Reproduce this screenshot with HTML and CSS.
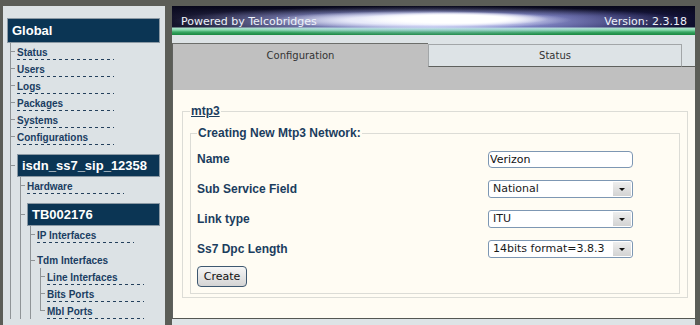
FILE: index.html
```html
<!DOCTYPE html>
<html lang="en">
<head>
<meta charset="utf-8">
<title>Telcobridges - Configuration</title>
<link rel="stylesheet" href="styles.css">
</head>
<body>
<div class="page">
  <aside class="sidebar">
    <div class="node-box root">Global</div>
    <ul class="tree">
      <li class="leaf"><a href="#">Status</a></li>
      <li class="leaf"><a href="#">Users</a></li>
      <li class="leaf"><a href="#">Logs</a></li>
      <li class="leaf"><a href="#">Packages</a></li>
      <li class="leaf"><a href="#">Systems</a></li>
      <li class="leaf"><a href="#">Configurations</a></li>
      <li class="branch"><div class="node-box">isdn_ss7_sip_12358</div>
        <ul class="tree sub">
          <li class="leaf"><a href="#">Hardware</a></li>
          <li class="branch"><div class="node-box">TB002176</div>
            <ul class="tree sub">
              <li class="leaf"><a href="#">IP Interfaces</a></li>
              <li class="folder"><span class="folder-label">Tdm Interfaces</span>
                <ul class="tree sub">
                  <li class="leaf"><a href="#">Line Interfaces</a></li>
                  <li class="leaf"><a href="#">Bits Ports</a></li>
                  <li class="leaf last"><a href="#">Mbl Ports</a></li>
                </ul>
              </li>
            </ul>
          </li>
        </ul>
      </li>
    </ul>
  </aside>
  <main class="main">
    <header class="banner">
      <span>Powered by Telcobridges</span>
      <span>Version: 2.3.18</span>
    </header>
    <div class="strip"></div>
    <nav class="tabs">
      <div class="tab active">Configuration</div>
      <div class="tab">Status</div>
      <div class="tab-fill"></div>
    </nav>
    <section class="panel">
      <div class="content">
        <fieldset class="outer">
          <legend class="legend-link">mtp3</legend>
          <fieldset class="inner">
            <legend>Creating New Mtp3 Network:</legend>
            <div class="form-grid">
              <label class="field-label">Name</label>
              <input class="text-input" type="text" value="Verizon">
              <label class="field-label">Sub Service Field</label>
              <div class="select"><span class="select-value">National</span><span class="select-btn"><span class="caret"></span></span></div>
              <label class="field-label">Link type</label>
              <div class="select"><span class="select-value">ITU</span><span class="select-btn"><span class="caret"></span></span></div>
              <label class="field-label">Ss7 Dpc Length</label>
              <div class="select"><span class="select-value">14bits format=3.8.3</span><span class="select-btn"><span class="caret"></span></span></div>
            </div>
            <button class="create-btn" type="button">Create</button>
          </fieldset>
        </fieldset>
      </div>
    </section>
  </main>
</div>
</body>
</html>
```
FILE: styles.css
```css
* { box-sizing: border-box; }
html, body { margin: 0; padding: 0; }
body {
  background: #5b5d57;
  font-family: "Liberation Sans", Arial, sans-serif;
  width: 700px;
  height: 325px;
  overflow: hidden;
}
.page {
  display: flex;
  gap: 7px;
  padding: 6px 0 0 3px;
  height: 325px;
  overflow: hidden;
}

/* ---------- sidebar ---------- */
.sidebar {
  width: 162px;
  flex: none;
  min-height: 340px;
  background: #dce2e5;
  padding: 12px 5px 0 0;
}
.node-box {
  display: block;
  height: 23px;
  line-height: 21px;
  padding-left: 4px;
  background: #0b3554;
  border: 1px solid #8b99a4;
  color: #ffffff;
  font-weight: bold;
  font-size: 13px;
  white-space: nowrap;
}
.node-box.root {
  margin-left: 4px;
  height: 25px;
  line-height: 23px;
}
.tree {
  list-style: none;
  margin: 0 0 0 7px;
  padding: 0;
}
.tree.sub { margin-left: 3px; }
.tree > li {
  --tick: 8px;
  padding-left: 7px;
  background:
    linear-gradient(#8f9497, #8f9497) 0 0 / 1px 100% no-repeat,
    linear-gradient(#8f9497, #8f9497) 0 var(--tick) / 5px 1px no-repeat;
}
.tree > li.last {
  background:
    linear-gradient(#8f9497, #8f9497) 0 0 / 1px calc(var(--tick) + 1px) no-repeat,
    linear-gradient(#8f9497, #8f9497) 0 var(--tick) / 5px 1px no-repeat;
}
.tree > li.branch {
  --tick: 20px;
  padding-top: 9px;
}
.tree > li.folder { --tick: 17px; }
.leaf a {
  display: block;
  width: 97px;
  padding: 4px 0 1px;
  line-height: 12px;
  font-size: 10px;
  font-weight: bold;
  color: #1a3d62;
  text-decoration: none;
  white-space: nowrap;
  background: repeating-linear-gradient(to right, #23405c 0 3px, transparent 3px 6px) 0 100% / 97px 1px no-repeat;
}
.folder-label {
  display: block;
  padding: 12px 0 1px;
  line-height: 12px;
  font-size: 10px;
  font-weight: bold;
  color: #1a3d62;
  white-space: nowrap;
}

/* ---------- main ---------- */
.main {
  width: 523px;
  flex: none;
  display: flex;
  flex-direction: column;
  background: #dde3e6;
}
.banner {
  height: 29px;
  display: flex;
  justify-content: space-between;
  align-items: flex-start;
  padding: 9px 8px 0 9px;
  font-family: "DejaVu Sans", sans-serif;
  font-size: 11px;
  line-height: 13px;
  color: #eef2fb;
  background-color: #101028;
  background-image:
    radial-gradient(95px 7px at 282px 13px, #ffffff 0%, #ffffff 55%, rgba(255,255,255,0) 100%),
    radial-gradient(150px 9px at 250px 14px, rgba(255,255,255,0.95) 0%, rgba(245,246,255,0.85) 50%, rgba(240,242,255,0) 100%),
    radial-gradient(260px 15px at 260px 15px, rgba(190,196,250,0.95) 0%, rgba(150,160,230,0) 100%),
    linear-gradient(to bottom, rgba(0,0,0,0) 0px, rgba(0,0,0,0) 21px, rgba(185,240,215,0.95) 22px, #86d9ab 24px, #3aa865 26px, #22904a 28px, #1d8a44 29px),
    linear-gradient(to bottom, #07071a 0px, #0c0c22 3px, rgba(30,30,60,0) 10px),
    linear-gradient(to right, #14142a 0%, #34345c 18%, #4a5090 36%, #8088c8 50%, #4a4f98 66%, #22225a 84%, #0e0e2c 100%);
}
.strip { height: 8px; }
.tabs {
  display: flex;
  height: 24px;
  font-family: "DejaVu Sans", sans-serif;
  font-size: 10px;
  color: #333333;
}
.tab {
  width: 254px;
  margin-top: 1px;
  height: 23px;
  line-height: 21px;
  text-align: center;
  background: #dde3e6;
  border: 1px solid #a2a6a8;
  border-bottom-color: #5f615e;
}
.tab.active {
  width: 256px;
  margin-top: 0;
  height: 24px;
  line-height: 23px;
  background: #c0c0c0;
  border: none;
  border-left: 1px solid #5f615e;
  border-top: 1px solid #6c6e6b;
}
.tab-fill {
  flex: 1;
  border-bottom: 1px solid #5f615e;
}
.panel {
  background: #c0c0c0;
  border-left: 1px solid #5f615e;
  border-bottom: 1px solid #555752;
  padding-top: 23px;
}
.content {
  height: 228px;
  background: #fffcf3;
  padding-top: 14px;
  overflow: hidden;
}
fieldset {
  margin: 0;
  min-width: 0;
  border: 1px solid #dcdcd6;
}
legend {
  padding: 0 1px;
  font-size: 12px;
  font-weight: bold;
  line-height: 14px;
  color: #1b3d5e;
}
.legend-link { text-decoration: underline; }
.outer {
  margin: 0 7px 0 9px;
  padding: 0 7px 3px;
}
.inner {
  margin: 8px 0 0 0;
  padding: 10px 6px 6px;
}
.form-grid {
  display: grid;
  grid-template-columns: 291px 145px;
  grid-auto-rows: 18px;
  row-gap: 12px;
  align-items: center;
}
.field-label {
  font-size: 12px;
  font-weight: bold;
  color: #1b3d5e;
  white-space: nowrap;
}
.text-input {
  height: 17px;
  width: 145px;
  margin: 1px 0 0;
  padding: 0 1px;
  border: 1px solid #7d97b3;
  border-radius: 4px;
  background: #ffffff;
  font-family: "DejaVu Sans", sans-serif;
  font-size: 11px;
  color: #111111;
  outline: none;
}
.select {
  display: flex;
  height: 18px;
  width: 145px;
  border: 1px solid #7d97b3;
  border-radius: 3px;
  background: #ffffff;
}
.select-value {
  flex: 1;
  padding-left: 4px;
  line-height: 16px;
  font-family: "DejaVu Sans", sans-serif;
  font-size: 11px;
  color: #1a1a1a;
  white-space: nowrap;
  overflow: hidden;
}
.select-btn {
  width: 18px;
  margin: 1px 1px 1px 0;
  background: linear-gradient(#eeeeee, #d3d3d3);
  display: flex;
  align-items: center;
  justify-content: center;
}
.caret {
  width: 0;
  height: 0;
  border-left: 3px solid transparent;
  border-right: 3px solid transparent;
  border-top: 3px solid #111111;
}
.create-btn {
  display: block;
  margin-top: 8px;
  width: 50px;
  height: 21px;
  padding: 0;
  border: 1px solid #3e5870;
  border-radius: 4px;
  background: linear-gradient(#f6f6f6, #d4d4d4);
  font-family: "DejaVu Sans", sans-serif;
  font-size: 11px;
  color: #111111;
}
```
